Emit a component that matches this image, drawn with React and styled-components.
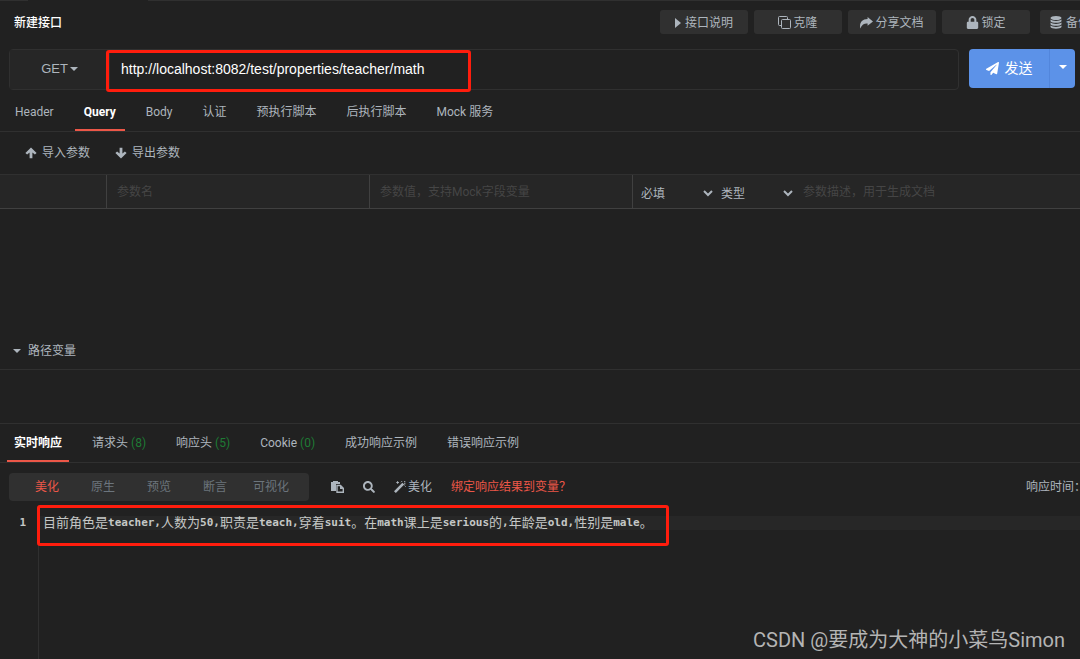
import React, { useState } from "react";
import styled, { createGlobalStyle } from "styled-components";
import { FaLock, FaPaperPlane, FaSearch } from "react-icons/fa";

const requestTabs = [
  { label: "Header" },
  { label: "Query" },
  { label: "Body" },
  { label: "认证" },
  { label: "预执行脚本" },
  { label: "后执行脚本" },
  { label: "Mock 服务" },
];

const responseTabs = [
  { label: "实时响应" },
  { label: "请求头", count: 8 },
  { label: "响应头", count: 5 },
  { label: "Cookie", count: 0 },
  { label: "成功响应示例" },
  { label: "错误响应示例" },
];

const viewModes = ["美化", "原生", "预览", "断言", "可视化"];

const responseText =
  "目前角色是teacher,人数为50,职责是teach,穿着suit。在math课上是serious的,年龄是old,性别是male。";

const CaretRight = () => (
  <svg width="6" height="10" viewBox="0 0 6 10" fill="currentColor">
    <path d="M0 0l6 5-6 5z" />
  </svg>
);

const CaretDown = () => (
  <svg width="8" height="4" viewBox="0 0 8 4" fill="currentColor">
    <path d="M0 0h8L4 4z" />
  </svg>
);

const CloneIcon = () => (
  <svg width="13" height="13" viewBox="0 0 13 13" fill="none" stroke="currentColor">
    <rect x="3.5" y="3.5" width="9" height="9" rx="1" />
    <path d="M3 9.5H1.5a1 1 0 0 1-1-1v-7a1 1 0 0 1 1-1h7a1 1 0 0 1 1 1V3" />
  </svg>
);

const ShareIcon = () => (
  <svg width="13" height="12" viewBox="0 0 12 11" fill="currentColor">
    <path d="M7 0L12 4 7 8V5.9C4 5.7 1.8 6.8.2 10.5-.6 5.4 1.8 1.9 7 1.9z" />
  </svg>
);

const DatabaseIcon = () => (
  <svg width="12" height="13" viewBox="0 0 12 13" fill="currentColor">
    <ellipse cx="6" cy="2" rx="5.5" ry="2" />
    <path d="M.5 3.6c2 1.9 9 1.9 11 0v1.6c-1 2-10 2-11 0z" />
    <path d="M.5 6.6c2 1.9 9 1.9 11 0v1.6c-1 2-10 2-11 0z" />
    <path d="M.5 9.6c2 1.9 9 1.9 11 0v1.5c-1 2.2-10 2.2-11 0z" />
  </svg>
);

const ArrowIcon = ({ down }) => (
  <svg width="12" height="12" viewBox="0 0 12 12" fill="currentColor">
    <path
      d="M6 .5l5.6 5.4-1.7 1.7-2.5-2.2v5.8H4.6V5.4L2.1 7.6.4 5.9z"
      transform={down ? "rotate(180 6 6)" : undefined}
    />
  </svg>
);

const PasteIcon = () => (
  <svg width="13" height="12" viewBox="0 0 13 12" fill="none">
    <path d="M0 1h2V0h5v1h2v2H5v7H0z" fill="currentColor" />
    <path d="M6 4.5h3.5l2.8 2.8v4H6z" stroke="currentColor" strokeWidth="1.4" />
    <path d="M9 4v4h3.5z" fill="currentColor" />
  </svg>
);

const WandIcon = () => (
  <svg width="12" height="12" viewBox="0 0 12 12" fill="none" stroke="currentColor">
    <path d="M.9 11.1L9.3 2.7" strokeWidth="2.6" />
    <path d="M7 1.2L8 .2M10.2 .6l1.2 -.4M10.6 4.6l1 1M3.6 .2v2.6M2.3 1.5h2.6M10.8 1.6v2" />
  </svg>
);

const Chevron = () => (
  <svg width="10" height="7" viewBox="0 0 10 7" fill="none" stroke="currentColor" strokeWidth="2">
    <path d="M1 1l4 4 4-4" />
  </svg>
);

const TabBar = ({ tabs, initial, pad }) => {
  const [active, setActive] = useState(initial);
  return (
    <TabList role="tablist">
      {tabs.map((tab) => (
        <Tab
          key={tab.label}
          type="button"
          role="tab"
          $pad={pad}
          $active={tab.label === active}
          aria-selected={tab.label === active}
          onClick={() => setActive(tab.label)}
        >
          {tab.label}
          {tab.count !== undefined && <Count>({tab.count})</Count>}
        </Tab>
      ))}
    </TabList>
  );
};

const SelectField = ({ label }) => (
  <SelectWrap>
    <select aria-label={label} defaultValue={label}>
      <option>{label}</option>
    </select>
    <Chevron />
  </SelectWrap>
);

const App = () => {
  const [url, setUrl] = useState("http://localhost:8082/test/properties/teacher/math");
  const [mode, setMode] = useState("美化");

  return (
    <Page>
      <GlobalStyle />
      <TopEdge />
      <Header>
        <Title>新建接口</Title>
        <Actions>
          <ActionButton type="button" $gap={4}>
            <CaretRight />
            接口说明
          </ActionButton>
          <ActionButton type="button">
            <CloneIcon />
            克隆
          </ActionButton>
          <ActionButton type="button">
            <ShareIcon />
            分享文档
          </ActionButton>
          <ActionButton type="button">
            <FaLock size={13} />
            锁定
          </ActionButton>
          <BackupButton type="button" $gap={4}>
            <DatabaseIcon />
            备份
          </BackupButton>
        </Actions>
      </Header>

      <RequestRow>
        <UrlBar>
          <MethodButton type="button">
            GET
            <CaretDown />
          </MethodButton>
          <UrlInput
            aria-label="URL"
            spellCheck={false}
            value={url}
            onChange={(e) => setUrl(e.target.value)}
          />
          <UrlHighlight />
        </UrlBar>
        <SendGroup>
          <SendButton type="button">
            <FaPaperPlane size={13} />
            发送
          </SendButton>
          <SendMenuButton type="button" aria-label="发送选项">
            <CaretDown />
          </SendMenuButton>
        </SendGroup>
      </RequestRow>

      <TabBar tabs={requestTabs} initial="Query" pad={9} />

      <ParamTools>
        <TextButton type="button">
          <ArrowIcon />
          导入参数
        </TextButton>
        <TextButton type="button">
          <ArrowIcon down />
          导出参数
        </TextButton>
      </ParamTools>

      <ParamRow>
        <ParamCell />
        <ParamCell>
          <ParamInput aria-label="参数名" placeholder="参数名" />
        </ParamCell>
        <ParamCell>
          <ParamInput aria-label="参数值" placeholder="参数值，支持Mock字段变量" />
        </ParamCell>
        <LastCell>
          <SelectField label="必填" />
          <SelectField label="类型" />
          <ParamInput aria-label="参数描述" placeholder="参数描述，用于生成文档" />
        </LastCell>
      </ParamRow>

      <PathSection>
        <PathButton type="button">
          <CaretDown />
          路径变量
        </PathButton>
      </PathSection>

      <ResponsePanel>
        <TabBar tabs={responseTabs} initial="实时响应" pad={7} />
        <ResponseTools>
          <Modes>
            {viewModes.map((name) => (
              <ModeButton
                key={name}
                type="button"
                $active={name === mode}
                onClick={() => setMode(name)}
              >
                {name}
              </ModeButton>
            ))}
          </Modes>
          <ToolButton type="button" aria-label="复制">
            <PasteIcon />
          </ToolButton>
          <ToolButton type="button" aria-label="搜索">
            <FaSearch size={12} />
          </ToolButton>
          <ToolButton type="button">
            <WandIcon />
            美化
          </ToolButton>
          <BindLink href="#bind">绑定响应结果到变量？</BindLink>
          <ResponseTime>响应时间：</ResponseTime>
        </ResponseTools>

        <Editor>
          <Gutter>1</Gutter>
          <Code>
            <CodeLine>
              {responseText.split(/([\x20-\x7e]+)/).map((part, i) =>
                i % 2 ? <b key={i}>{part}</b> : <span key={i}>{part}</span>
              )}
            </CodeLine>
            <CodeHighlight />
          </Code>
        </Editor>
      </ResponsePanel>

      <Watermark>CSDN @要成为大神的小菜鸟Simon</Watermark>
    </Page>
  );
};

export default App;

const GlobalStyle = createGlobalStyle`
  * {
    box-sizing: border-box;
  }

  body {
    margin: 0;
    background: #212121;
    color: #adb5bd;
    font-family: Roboto, "Noto Sans CJK SC", sans-serif;
    font-size: 12px;
    line-height: 18px;
  }

  button,
  input,
  select {
    margin: 0;
    padding: 0;
    border: 0;
    outline: 0;
    background: none;
    color: inherit;
    font: inherit;
  }

  button,
  select {
    cursor: pointer;
  }

  svg {
    flex-shrink: 0;
  }
`;

const Page = styled.div`
  position: relative;
  display: flex;
  flex-direction: column;
  min-height: 100vh;
  overflow: hidden;
`;

const TopEdge = styled.div`
  height: 1px;
  background: linear-gradient(
    to right,
    #303030 28px,
    transparent 28px,
    transparent 148px,
    #303030 148px
  );
`;

const Header = styled.header`
  display: flex;
  align-items: center;
  justify-content: space-between;
  height: 42px;
  padding-left: 14px;
`;

const Title = styled.h1`
  margin: 0;
  padding-top: 2px;
  color: #fff;
  font-size: 12px;
  font-weight: 500;
`;

const Actions = styled.div`
  display: flex;
  gap: 6px;
  margin-right: -48px;
`;

const ActionButton = styled.button`
  display: flex;
  align-items: center;
  justify-content: center;
  gap: ${({ $gap = 2 }) => $gap}px;
  width: 88px;
  height: 24px;
  padding-top: 1px;
  border-radius: 3px;
  background: #303030;
`;

const BackupButton = styled(ActionButton)`
  justify-content: flex-start;
  margin-left: 4px;
  padding-left: 10px;
`;

const RequestRow = styled.div`
  display: flex;
  gap: 10px;
  padding: 6px 5px 0 9px;
`;

const UrlBar = styled.div`
  position: relative;
  display: flex;
  flex: 1;
  height: 41px;
  border: 1px solid #303030;
  border-radius: 4px;
  font-family: "Liberation Sans", Arial, sans-serif;
`;

const MethodButton = styled.button`
  display: flex;
  align-items: center;
  justify-content: center;
  gap: 2px;
  width: 100px;
  padding-bottom: 2px;
  border-right: 1px solid #303030;
  background: #262626;
  font-size: 13px;
`;

const UrlInput = styled.input`
  flex: 1;
  padding: 0 0 2px 11px;
  color: #fff;
  font-size: 14px;
`;

const Highlight = styled.div`
  position: absolute;
  border: 3px solid #ff1d0d;
  border-radius: 3px;
  pointer-events: none;
`;

const UrlHighlight = styled(Highlight)`
  top: 0;
  left: 96px;
  width: 365px;
  height: 42px;
`;

const SendGroup = styled.div`
  display: flex;
  width: 106px;
  height: 39px;
  border-radius: 4px;
  overflow: hidden;
  background: #5c92e8;
  color: #fff;
`;

const SendButton = styled.button`
  display: flex;
  flex: 1;
  align-items: center;
  justify-content: center;
  gap: 6px;
  padding-bottom: 1px;
  font-size: 14px;
`;

const SendMenuButton = styled.button`
  display: flex;
  align-items: center;
  justify-content: center;
  width: 26px;
  padding-bottom: 3px;
  border-left: 1px solid #5286dc;
`;

const TabList = styled.div`
  display: flex;
  gap: 12px;
  height: 42px;
  padding-left: 6px;
  border-bottom: 1px solid #303030;
`;

const Tab = styled.button`
  padding: 5px ${({ $pad }) => $pad}px 0;
  border-bottom: 2px solid ${({ $active }) => ($active ? "#ec5748" : "transparent")};
  color: ${({ $active }) => ($active ? "#fff" : "inherit")};
  font-weight: ${({ $active }) => ($active ? 700 : 400)};
  white-space: nowrap;
`;

const Count = styled.span`
  margin-left: 3px;
  color: #1e7b34;
`;

const ParamTools = styled.div`
  display: flex;
  gap: 25px;
  height: 43px;
  padding-left: 25px;
  border-bottom: 1px solid #303030;
`;

const TextButton = styled.button`
  display: flex;
  align-items: center;
  gap: 5px;
`;

const ParamRow = styled.div`
  display: grid;
  grid-template-columns: 107px 263px 263px 1fr;
  height: 34px;
  border-bottom: 1px solid #404040;
  background: #262626;
`;

const ParamCell = styled.div`
  display: flex;
  border-right: 1px solid #404040;
`;

const LastCell = styled(ParamCell)`
  border-right: 0;
`;

const ParamInput = styled.input`
  flex: 1;
  min-width: 0;
  padding-left: 10px;

  &::placeholder {
    color: #454545;
    opacity: 1;
  }
`;

const SelectWrap = styled.label`
  display: flex;
  align-items: center;
  width: 80px;
  padding: 4px 0 0 8px;

  select {
    flex: 1;
    appearance: none;
  }
`;

const PathSection = styled.section`
  display: flex;
  align-items: flex-end;
  height: 161px;
  padding: 0 0 9px 13px;
  border-bottom: 1px solid #303030;
`;

const PathButton = styled(TextButton)`
  gap: 7px;
`;

const ResponsePanel = styled.section`
  display: flex;
  flex: 1;
  flex-direction: column;
  margin-top: 53px;
  border-top: 1px solid #303030;

  ${TabList} {
    gap: 16px;
    height: 39px;
    padding-left: 7px;
  }

  ${Tab} {
    padding-top: 2px;
  }
`;

const ResponseTools = styled.div`
  display: flex;
  align-items: center;
  gap: 19px;
  padding: 10px 0 15px 9px;
`;

const Modes = styled.div`
  display: flex;
  height: 28px;
  margin-right: 3px;
  padding: 0 10px;
  border-radius: 4px;
  background: #303030;
`;

const ModeButton = styled.button`
  width: 56px;
  color: ${({ $active }) => ($active ? "#ec5748" : "#6c757d")};
`;

const ToolButton = styled.button`
  display: flex;
  align-items: center;
  gap: 2px;
`;

const BindLink = styled.a`
  color: #ec5748;
  text-decoration: none;
`;

const ResponseTime = styled.span`
  margin: 0 -6px 0 auto;
  white-space: nowrap;
`;

const Editor = styled.div`
  display: flex;
  flex: 1;
  font-family: "DejaVu Sans Mono", "Noto Sans CJK SC", monospace;
  line-height: 14px;
`;

const Gutter = styled.div`
  width: 39px;
  padding-right: 12px;
  border-right: 1px solid #303030;
  color: #c5c8c6;
  font-size: 11px;
  font-weight: 700;
  text-align: right;
`;

const Code = styled.div`
  position: relative;
  flex: 1;
`;

const CodeLine = styled.div`
  display: flex;
  height: 14px;
  padding-left: 4px;
  background: #272727;
  color: #c5c8c6;
  white-space: pre;

  b {
    font-size: 11px;
  }

  span {
    font-size: 13px;
  }
`;

const CodeHighlight = styled(Highlight)`
  top: -11px;
  left: -2px;
  width: 632px;
  height: 41px;
`;

const Watermark = styled.div`
  position: absolute;
  right: 15px;
  bottom: 5px;
  color: #b4b4b4;
  font-size: 20px;
  line-height: 28px;
`;
